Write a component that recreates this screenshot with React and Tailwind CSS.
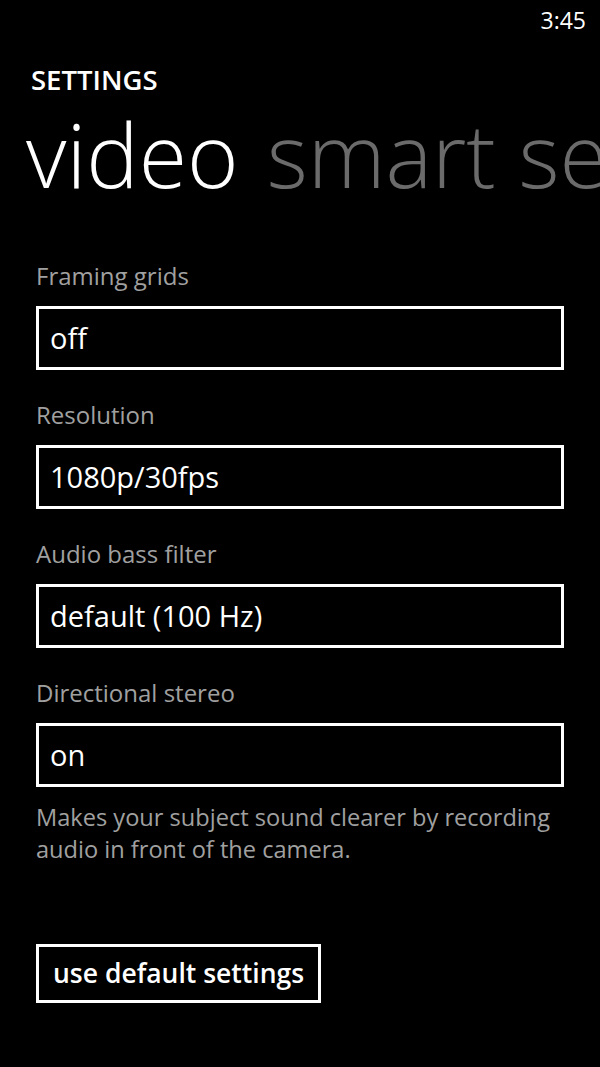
import React from "react";

const font = { fontFamily: '"Open Sans", "Noto Sans", sans-serif' };

const settings = [
  { label: "Framing grids", value: "off" },
  { label: "Resolution", value: "1080p/30fps" },
  { label: "Audio bass filter", value: "default (100 Hz)" },
  { label: "Directional stereo", value: "on" },
];

const Picker = ({ label, value }) => (
  <div className="flex flex-col">
    <p className="text-[24px] leading-[32px] text-[#a0a0a0]">{label}</p>
    <div className="mt-[14px] h-[64px] border-[3px] border-white flex items-center px-[11px]">
      <span className="text-[29px] text-white">{value}</span>
    </div>
  </div>
);

const App = () => {
  return (
    <div
      className="w-[600px] h-[1067px] bg-black text-white overflow-hidden flex flex-col"
      style={font}
    >
      <div className="flex justify-end pr-[14px] pt-[3px] h-[40px]">
        <span className="text-[23px]">3:45</span>
      </div>
      <p className="mt-[24px] pl-[31px] text-[27.5px] font-semibold leading-[32px]">
        SETTINGS
      </p>
      {/* pivot headers, the next one runs off the right edge */}
      <div className="flex gap-[28px] pl-[26px] mt-[10px] overflow-hidden whitespace-nowrap text-[88px] font-light leading-[96px]">
        <span>video</span>
        <span className="text-[#6b6b6b]">smart sequence</span>
      </div>
      <div className="mt-[58px] px-[36px] flex flex-col gap-[29px]">
        {settings.map((s) => (
          <Picker key={s.label} label={s.label} value={s.value} />
        ))}
      </div>
      <p className="mt-[14px] px-[36px] text-[23.6px] leading-[32px] text-[#a0a0a0]">
        Makes your subject sound clearer by recording audio in front of the
        camera.
      </p>
      <div className="mt-[79px] pl-[36px]">
        <button className="h-[59px] border-[3px] border-white px-[14px] text-[26.5px] font-semibold text-white">
          use default settings
        </button>
      </div>
    </div>
  );
};

export default App;
